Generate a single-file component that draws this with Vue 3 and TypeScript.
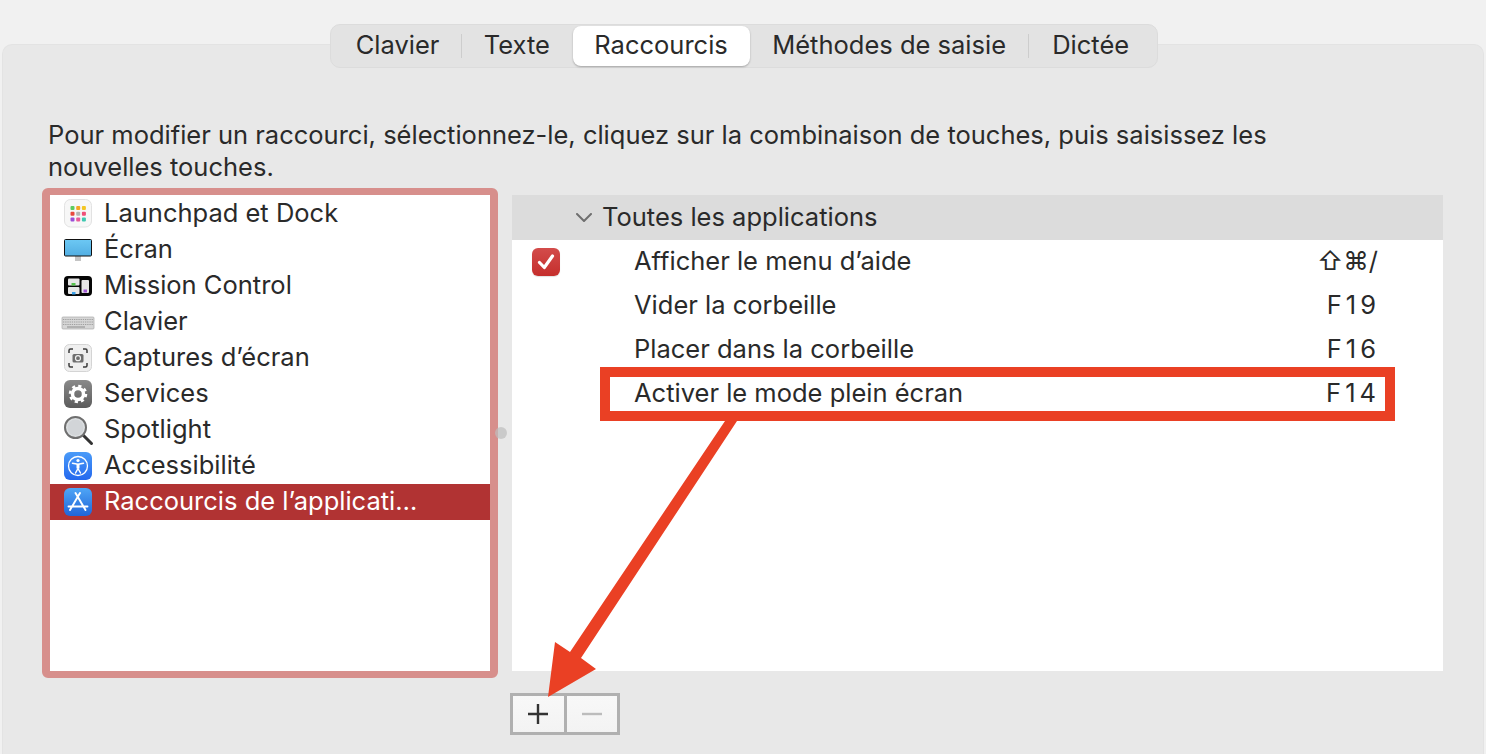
<script setup lang="ts">
interface SideItem {
  icon: string
  label: string
  selected?: boolean
}
interface ShortcutRow {
  label: string
  keys: string
  checked?: boolean
}

const tabs = ['Clavier', 'Texte', 'Raccourcis', 'Méthodes de saisie', 'Dictée']
const activeTab = 'Raccourcis'

const sideItems: SideItem[] = [
  { icon: 'launchpad', label: 'Launchpad et Dock' },
  { icon: 'screen', label: 'Écran' },
  { icon: 'mission', label: 'Mission Control' },
  { icon: 'keyboard', label: 'Clavier' },
  { icon: 'capture', label: 'Captures d’écran' },
  { icon: 'services', label: 'Services' },
  { icon: 'spotlight', label: 'Spotlight' },
  { icon: 'access', label: 'Accessibilité' },
  { icon: 'appstore', label: 'Raccourcis de l’applicati…', selected: true },
]

const rows: ShortcutRow[] = [
  { label: 'Afficher le menu d’aide', keys: '⇧⌘/', checked: true },
  { label: 'Vider la corbeille', keys: 'F19' },
  { label: 'Placer dans la corbeille', keys: 'F16' },
  { label: 'Activer le mode plein écran', keys: 'F14' },
]

const dots = ['#5ccb5f', '#f5a623', '#f3c623', '#e8483f', '#b5b5b5', '#ef4f78', '#9b4fd8', '#e85a9a', '#3fc8b0']
</script>

<template>
  <div class="page">
    <nav class="tabs">
      <template v-for="(tab, i) in tabs" :key="tab">
        <span v-if="i > 0" class="sep" :class="{ hidden: tab === activeTab || tabs[i - 1] === activeTab }"></span>
        <div class="tab" :class="{ active: tab === activeTab }">{{ tab }}</div>
      </template>
    </nav>

    <section class="panel">
      <p class="intro">Pour modifier un raccourci, sélectionnez-le, cliquez sur la combinaison de touches, puis saisissez les nouvelles touches.</p>

      <div class="columns">
        <ul class="side">
          <li v-for="item in sideItems" :key="item.icon" class="side-row" :class="{ selected: item.selected }">
            <svg class="ico" viewBox="0 0 28 28">
              <g v-if="item.icon === 'launchpad'" transform="translate(0 -1)">
                <rect x="0.5" y="0.5" width="27" height="27.5" rx="6" fill="#f7f7f7" stroke="#e2e2e2" />
                <rect
                  v-for="(c, n) in dots"
                  :key="n"
                  :x="6.5 + (n % 3) * 5.7"
                  :y="7 + Math.floor(n / 3) * 5.7"
                  width="4"
                  height="4"
                  rx="1"
                  :fill="c"
                />
              </g>
              <g v-else-if="item.icon === 'screen'" transform="translate(0 3)">
                <rect x="11" y="17" width="6" height="5" fill="#c4c4c4" />
                <rect x="0.5" y="0.5" width="27" height="16.500" rx="1" fill="url(#screenFill)" stroke="#111" />
                <defs>
                  <linearGradient id="screenFill" x1="0" y1="0" x2="0" y2="1">
                    <stop offset="0" stop-color="#6cc8f4" />
                    <stop offset="1" stop-color="#52aee2" />
                  </linearGradient>
                </defs>
              </g>
              <g v-else-if="item.icon === 'mission'" transform="translate(0 4)">
                <rect x="0" y="0" width="28" height="20" rx="4" fill="#060606" />
                <rect x="4" y="2.500" width="11.500" height="7" rx="1" fill="#e6e6e6" />
                <rect x="7.500" y="7" width="4" height="2.500" fill="#55c24c" />
                <rect x="4" y="11" width="11.500" height="7" rx="1" fill="#e6e6e6" />
                <rect x="8" y="16" width="3.500" height="2.500" fill="#3aa0e8" />
                <rect x="17.500" y="4" width="7.500" height="13" rx="1" fill="#e6e6e6" />
                <rect x="19.500" y="13.500" width="3.500" height="3" fill="#a45ad8" />
              </g>
              <g v-else-if="item.icon === 'keyboard'" transform="translate(0 4)">
                <rect x="-2" y="5" width="32" height="12" rx="1" fill="#d6d6d6" stroke="#ababab" stroke-width="0.7" />
                <path d="M-1 7.500H29M-1 10H29M-1 12.500H29" stroke="#a0a0a0" stroke-width="1.100" stroke-dasharray="1.300 0.900" />
                <path d="M3 15H21" stroke="#a8a8a8" stroke-width="1.600" />
              </g>
              <template v-else-if="item.icon === 'capture'">
                <rect x="0.5" y="0.5" width="27" height="27" rx="5" fill="#efefef" stroke="#d4d4d4" />
                <path d="M5 9V6.500A1.500 1.500 0 0 1 6.500 5H9M19 5h2.500A1.500 1.500 0 0 1 23 6.500V9M23 19v2.500a1.500 1.500 0 0 1-1.500 1.500H19M9 23H6.500A1.500 1.500 0 0 1 5 21.500V19" fill="none" stroke="#3c3c3c" stroke-width="1.500" />
                <rect x="8.500" y="10" width="11" height="8.500" rx="1.500" fill="#6e6e6e" />
                <circle cx="14" cy="14.200" r="2.500" fill="none" stroke="#f0f0f0" stroke-width="1.200" />
              </template>
              <template v-else-if="item.icon === 'services'">
                <defs>
                  <linearGradient id="servFill" x1="0" y1="0" x2="0" y2="1">
                    <stop offset="0" stop-color="#8a8a8a" />
                    <stop offset="1" stop-color="#5c5c5c" />
                  </linearGradient>
                </defs>
                <rect width="28" height="28" rx="6" fill="url(#servFill)" />
                <circle cx="14" cy="14" r="5.500" fill="none" stroke="#fff" stroke-width="3.500" />
                <circle cx="14" cy="14" r="8" fill="none" stroke="#fff" stroke-width="2.500" stroke-dasharray="3.200 3.083" />
              </template>
              <template v-else-if="item.icon === 'spotlight'">
                <path d="M18.500 18.500L27.500 27.500" stroke="#333" stroke-width="3" stroke-linecap="round" />
                <circle cx="11.500" cy="11.500" r="10.500" fill="#dcdfe1" stroke="#6f6f6f" stroke-width="2" />
                <circle cx="11.500" cy="11.500" r="8" fill="#d2d5d8" />
              </template>
              <template v-else-if="item.icon === 'access'">
                <defs>
                  <linearGradient id="accFill" x1="0" y1="0" x2="0" y2="1">
                    <stop offset="0" stop-color="#4a9bf8" />
                    <stop offset="1" stop-color="#2468ee" />
                  </linearGradient>
                </defs>
                <rect width="28" height="28" rx="6" fill="url(#accFill)" />
                <circle cx="14" cy="14" r="9.500" fill="none" stroke="#fff" stroke-width="1.300" />
                <circle cx="14" cy="8.500" r="1.600" fill="#fff" />
                <path d="M8.500 11.300L14 12.300L19.500 11.300M14 16.500L11.500 21M14 16.500L16.500 21" fill="none" stroke="#fff" stroke-width="1.500" stroke-linecap="round" stroke-linejoin="round" />
                <path d="M14 12V16.500" stroke="#fff" stroke-width="3" />
              </template>
              <template v-else-if="item.icon === 'appstore'">
                <defs>
                  <linearGradient id="appFill" x1="0" y1="0" x2="0" y2="1">
                    <stop offset="0" stop-color="#4fa6f6" />
                    <stop offset="1" stop-color="#2065d8" />
                  </linearGradient>
                </defs>
                <rect width="28" height="28" rx="6" fill="url(#appFill)" />
                <path d="M11.500 5L21.500 22M16 5L6 22M4.500 18.500H23.500" fill="none" stroke="#fff" stroke-width="1.900" stroke-linecap="round" />
              </template>
            </svg>
            <span class="side-label">{{ item.label }}</span>
          </li>
        </ul>

        <div class="detail">
          <div class="detail-head">
            <svg class="chevron" viewBox="0 0 16 9">
              <path d="M1 1L8 8L15 1" fill="none" stroke="#6f6f6f" stroke-width="2" stroke-linecap="round" stroke-linejoin="round" />
            </svg>
            <span class="head-text">Toutes les applications</span>
          </div>
          <div v-for="row in rows" :key="row.label" class="detail-row">
            <div class="check-col">
              <div v-if="row.checked" class="check">
                <svg viewBox="0 0 28 28">
                  <path d="M7.500 14.500L12.300 19.500L20.500 8" fill="none" stroke="#fff" stroke-width="3.200" stroke-linecap="round" stroke-linejoin="round" />
                </svg>
              </div>
            </div>
            <span class="row-label">{{ row.label }}</span>
            <span class="row-keys" :class="row.keys.startsWith('F') ? 'fkey' : 'glyphs'">{{ row.keys }}</span>
          </div>
        </div>
      </div>

      <div class="buttons">
        <button class="btn" type="button">
          <svg viewBox="0 0 24 24"><path d="M12 2V22M2 12H22" stroke="#333" stroke-width="2.400" /></svg>
        </button>
        <button class="btn" type="button">
          <svg viewBox="0 0 24 24"><path d="M2 12H22" stroke="#bcbcbc" stroke-width="2.400" /></svg>
        </button>
      </div>
    </section>

    <!-- annotation drawn over the window -->
    <div class="knob"></div>
    <div class="callout"></div>
    <svg class="arrow" viewBox="0 0 1486 754">
      <path d="M725 421H737L581 658L596 669L548 697L555 642L570 652Z" fill="#ea4024" />
    </svg>
  </div>
</template>

<style scoped>
.page {
  position: relative;
  height: 754px;
  padding-top: 24px;
  box-sizing: border-box;
  overflow: hidden;
  background: #f1f1f1;
  font-family: Inter, "Liberation Sans", sans-serif;
  font-size: 25.5px;
  color: #2a2a2a;
}

.tabs {
  position: relative;
  z-index: 1;
  display: flex;
  align-items: center;
  width: 828px;
  height: 44px;
  margin: 0 auto 0 330px;
  padding: 0 2px 0 3px;
  box-sizing: border-box;
  background: #e3e3e3;
  border: 1px solid #dcdcdc;
  border-radius: 10px;
}

.tab {
  flex: none;
  height: 40px;
  line-height: 38px;
  padding: 0 21.7px;
  box-sizing: border-box;
  white-space: nowrap;
  text-align: center;
}

.tab:last-child {
  padding-left: 23.5px;
}

.tab.active {
  background: #fff;
  border-radius: 8px;
  box-shadow: 0 1px 2px rgba(0, 0, 0, 0.28);
}

.sep {
  flex: none;
  width: 1px;
  height: 24px;
  background: #cdcdcd;
}

.sep.hidden {
  background: transparent;
}

.panel {
  height: 710px;
  margin: -24px 2px 0;
  padding: 74px 0 0 39px;
  box-sizing: border-box;
  background: #e8e8e8;
  border: 1px solid #e3e3e3;
  border-bottom: none;
  border-radius: 10px 10px 0 0;
}

.intro {
  width: 1260px;
  margin: 0 0 5px 6px;
  line-height: 32px;
}

.columns {
  display: flex;
  align-items: flex-start;
  gap: 14px;
}

.side {
  flex: none;
  width: 456px;
  height: 490px;
  margin: 0;
  padding: 1px 0 0;
  box-sizing: border-box;
  list-style: none;
  background: #fff;
  border-style: solid;
  border-color: #d78f8c;
  border-width: 7px 8px;
  border-radius: 6px;
}

.side-row {
  display: flex;
  align-items: center;
  gap: 12px;
  height: 36px;
  padding-left: 14px;
}

.side-row.selected {
  background: #b13333;
  color: #fff;
}

.ico {
  flex: none;
  width: 28px;
  height: 28px;
  overflow: visible;
}

.side-label {
  padding-bottom: 4px;
  white-space: nowrap;
}

.detail {
  flex: none;
  width: 931px;
  height: 476px;
  margin-top: 7px;
  background: #fff;
}

.detail-head {
  display: flex;
  align-items: center;
  gap: 10px;
  height: 45px;
  padding-left: 64px;
  background: #dcdcdc;
}

.head-text {
  padding-bottom: 2px;
}

.chevron {
  width: 16px;
  height: 9px;
}

.detail-row {
  display: flex;
  align-items: center;
  height: 44px;
  padding-right: 63px;
}

.check-col {
  flex: none;
  width: 122px;
  padding-left: 20px;
  box-sizing: border-box;
}

.check {
  width: 28px;
  height: 28px;
  border-radius: 6px;
  background: linear-gradient(#d34c4b, #c52e2c);
  box-shadow: 0 1px 1px rgba(0, 0, 0, 0.12);
}

.check svg {
  display: block;
}

.row-label {
  flex: 1;
  padding-bottom: 4px;
}

.row-keys {
  padding-bottom: 4px;
  font-family: Inter, "DejaVu Sans", sans-serif;
}

.fkey {
  letter-spacing: 4px;
}

.glyphs {
  margin-right: 2px;
}

.buttons {
  display: flex;
  width: 110px;
  height: 42px;
  margin: 15px 0 0 468px;
  box-sizing: border-box;
  border: 3px solid #b0b0b0;
  background: #b0b0b0;
  gap: 3px;
}

.btn {
  flex: 1;
  display: flex;
  align-items: center;
  justify-content: center;
  padding: 0;
  border: none;
  background: linear-gradient(#f8f8f8, #f3f3f3);
}

.btn svg {
  width: 24px;
  height: 24px;
}

.knob {
  position: absolute;
  left: 495px;
  top: 427px;
  width: 12px;
  height: 12px;
  border-radius: 50%;
  background: rgba(190, 190, 190, 0.7);
}

.callout {
  position: absolute;
  left: 600px;
  top: 367px;
  width: 795px;
  height: 54px;
  box-sizing: border-box;
  border: 10px solid #ea4024;
}

.arrow {
  position: absolute;
  left: 0;
  top: 0;
  width: 1486px;
  height: 754px;
  pointer-events: none;
}
</style>

<style>
html,
body {
  margin: 0;
  background: #f1f1f1;
}
</style>
